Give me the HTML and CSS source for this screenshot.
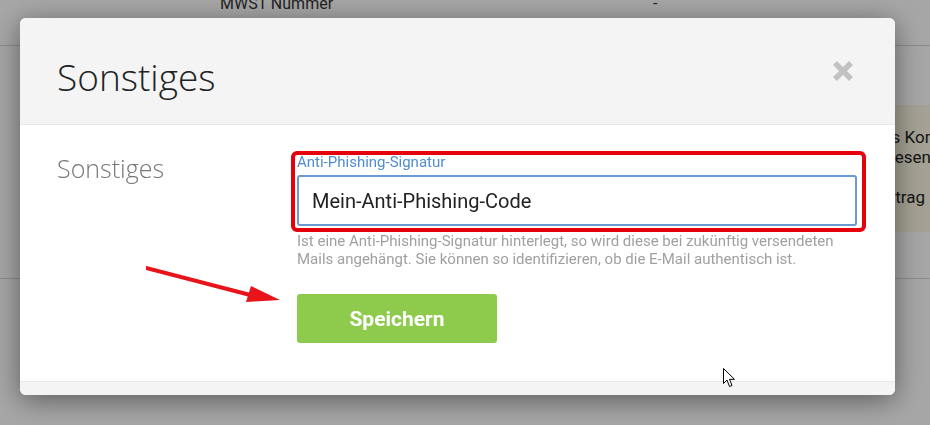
FILE: index.html
```html
<!DOCTYPE html>
<html lang="de">
<head>
    <meta charset="UTF-8">
    <meta name="viewport" content="width=device-width, initial-scale=1.0">
    <title>Sonstiges</title>
    <link rel="stylesheet" href="styles.css">
</head>
<body>
    <!-- Seite im Hintergrund -->
    <div class="page">
        <div class="detail-row">
            <span class="detail-key">MWST Nummer</span>
            <span class="detail-value">-</span>
        </div>
        <div class="detail-section">
            <div class="notice">
                <div class="notice-line l1">des Kontos</div>
                <div class="notice-line l2">gelesen</div>
                <div class="notice-line l3">Eintrag</div>
            </div>
        </div>
    </div>

    <div class="overlay">
        <div class="modal">
            <div class="modal-header">
                <h2 class="modal-title">Sonstiges</h2>
                <button class="close" aria-label="Schließen">
                    <svg width="24" height="22" viewBox="0 0 24 22">
                        <path d="M4 3 L20 19 M20 3 L4 19" stroke="#c2c2c2" stroke-width="5.5" stroke-linecap="butt"/>
                    </svg>
                </button>
            </div>
            <div class="modal-body">
                <div class="section-label">Sonstiges</div>
                <div class="section-fields">
                    <div class="field">
                        <label class="field-label" for="sig">Anti-Phishing-Signatur</label>
                        <input class="field-input" id="sig" type="text" value="Mein-Anti-Phishing-Code">
                        <!-- Markierung -->
                        <div class="highlight"></div>
                    </div>
                    <p class="help">Ist eine Anti-Phishing-Signatur hinterlegt, so wird diese bei zukünftig versendeten Mails angehängt. Sie können so identifizieren, ob die E-Mail authentisch ist.</p>
                    <button class="btn-save">Speichern</button>
                </div>
            </div>
            <div class="modal-footer"></div>
        </div>
    </div>

    <!-- roter Pfeil -->
    <svg class="arrow" width="140" height="45" viewBox="0 0 140 45">
        <path d="M0 2 L112 31" stroke="#e8141b" stroke-width="4" stroke-linecap="round"/>
        <path d="M134 34 L105 20 L100 36 Z" fill="#e8141b"/>
    </svg>

    <!-- Mauszeiger -->
    <svg class="cursor" width="13" height="20" viewBox="0 0 13 20">
        <path d="M0.5 0.5 L0.5 15.5 L4 12 L6.5 18.5 L9 17.5 L6.5 11.3 L11.5 11.3 Z" fill="#fff" stroke="#000" stroke-width="1"/>
    </svg>
</body>
</html>
```

FILE: styles.css
```css
body {
    margin: 0;
    font-family: Roboto, "Liberation Sans", sans-serif;
    background-color: #fff;
    color: #333;
    height: 100vh;
    overflow: hidden;
}

/* Hintergrundseite */
.page {
    margin-top: -7px;
}

.detail-row {
    display: flex;
    height: 22px;
    padding-bottom: 30px;
    border-bottom: 1px solid #d6d6d6;
    font-size: 16px;
    line-height: 22px;
}

.detail-key {
    margin-left: 220px;
    width: 433px;
}

.detail-section {
    height: 233px;
    border-bottom: 1px solid #d6d6d6;
    padding-top: 59px;
    box-sizing: border-box;
}

.notice {
    margin-left: 870px;
    height: 127px;
    padding-top: 22px;
    box-sizing: border-box;
    background-color: #fcf8e3;
    font-size: 17px;
    line-height: 20px;
    color: #222;
    white-space: nowrap;
    overflow: hidden;
}

.notice-line.l1 { margin-left: 3px; }
.notice-line.l2 { margin-left: 2px; margin-bottom: 20px; }
.notice-line.l3 { margin-left: 2px; }

/* Overlay und Modal */
.overlay {
    position: fixed;
    inset: 0;
    background-color: rgba(0, 0, 0, 0.35);
    padding: 18px 35px 0 20px;
}

.modal {
    width: 875px;
    background-color: #fff;
    border-radius: 6px;
    overflow: hidden;
    box-shadow: 0 5px 28px rgba(0, 0, 0, 0.45);
}

.modal-header {
    height: 107px;
    box-sizing: border-box;
    display: flex;
    align-items: center;
    justify-content: space-between;
    padding: 0 40px 0 37px;
    background-color: #f4f4f4;
    border-bottom: 1px solid #e8e8e8;
}

.modal-title {
    margin: 12px 0 0 0;
    font-family: "Open Sans", sans-serif;
    font-weight: 300;
    font-size: 37px;
    line-height: 44px;
    color: #222;
}

.close {
    border: none;
    background: none;
    padding: 0;
    cursor: pointer;
    display: flex;
}

.modal-body {
    display: grid;
    grid-template-columns: 240px 1fr;
    padding: 29px 38px 38px 37px;
}

.section-label {
    font-family: "Open Sans", sans-serif;
    font-weight: 300;
    font-size: 25px;
    line-height: 31px;
    color: #777;
    margin-top: -1px;
}

.field {
    position: relative;
}

.field-label {
    display: block;
    font-size: 15px;
    line-height: 16px;
    color: #4f8cd0;
    margin-bottom: 5px;
}

.field-input {
    display: block;
    width: 100%;
    height: 51px;
    box-sizing: border-box;
    border: 2px solid #6a9ad0;
    border-radius: 3px;
    padding: 0 13px;
    font-family: Roboto, sans-serif;
    font-size: 20px;
    color: #222;
    outline: none;
}

.highlight {
    position: absolute;
    top: -3px;
    left: -6px;
    right: -9px;
    bottom: -6px;
    border: 4px solid #e6000c;
    border-radius: 6px;
    pointer-events: none;
}

.help {
    margin: 6px 0 0 0;
    font-size: 15px;
    line-height: 18px;
    color: #a0a0a0;
}

.btn-save {
    margin-top: 26px;
    width: 200px;
    height: 49px;
    border: none;
    border-radius: 3px;
    background-color: #8ecb4c;
    color: #fff;
    font-family: Roboto, sans-serif;
    font-weight: bold;
    font-size: 21px;
    cursor: pointer;
}

.modal-footer {
    height: 13px;
    background-color: #f4f4f4;
    border-top: 1px solid #e8e8e8;
}

/* Annotationen */
.arrow {
    position: absolute;
    left: 146px;
    top: 266px;
}

.cursor {
    position: absolute;
    left: 723px;
    top: 368px;
}
```
